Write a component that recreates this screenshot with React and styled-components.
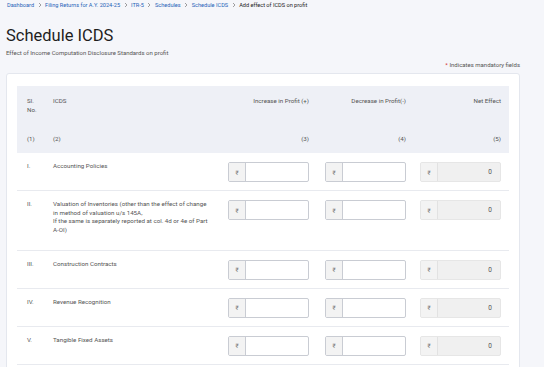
import styled, { createGlobalStyle } from 'styled-components';

const rows = [
  { no: 'I.', label: ['Accounting Policies'] },
  {
    no: 'II.',
    label: [
      'Valuation of Inventories (other than the effect of change',
      'in method of valuation u/s 145A,',
      'If the same is separately reported at col. 4d or 4e of Part',
      'A-OI)',
    ],
  },
  { no: 'III.', label: ['Construction Contracts'] },
  { no: 'IV.', label: ['Revenue Recognition'] },
  { no: 'V.', label: ['Tangible Fixed Assets'] },
];

const crumbs = [
  'Dashboard',
  'Filing Returns for A.Y. 2024-25',
  'ITR-5',
  'Schedules',
  'Schedule ICDS',
];

function Chevron() {
  return (
    <Sep viewBox="0 0 4 6" aria-hidden="true">
      <path d="M1 1l2 2-2 2" fill="none" stroke="#888" strokeWidth="0.8" />
    </Sep>
  );
}

function AmountInput({ disabled }) {
  return (
    <InputBox disabled={disabled}>
      <Prefix disabled={disabled}>₹</Prefix>
      <Field disabled={disabled}>{disabled ? '0' : ''}</Field>
    </InputBox>
  );
}

export default function App() {
  return (
    <Page>
      <GlobalStyle />
      <Breadcrumb>
        {crumbs.map((c) => (
          <Crumb key={c}>
            <CrumbLink>{c}</CrumbLink>
            <Chevron />
          </Crumb>
        ))}
        <Current>Add effect of ICDS on profit</Current>
      </Breadcrumb>

      <Title>Schedule ICDS</Title>
      <Subtitle>Effect of Income Computation Disclosure Standards on profit</Subtitle>
      <Mandatory>
        <Star>*</Star> Indicates mandatory fields
      </Mandatory>

      <Card>
        <HeadRow>
          <HeadCell>
            Sl.
            <br />
            No.
          </HeadCell>
          <HeadCell>ICDS</HeadCell>
          <HeadCell right>Increase in Profit (+)</HeadCell>
          <HeadCell right>Decrease in Profit(-)</HeadCell>
          <HeadCell right>Net Effect</HeadCell>
        </HeadRow>
        <NumRow>
          <HeadCell>(1)</HeadCell>
          <HeadCell>(2)</HeadCell>
          <HeadCell right>(3)</HeadCell>
          <HeadCell right>(4)</HeadCell>
          <HeadCell right>(5)</HeadCell>
        </NumRow>

        {rows.map((r) => (
          <Row key={r.no}>
            <Cell>{r.no}</Cell>
            <Label>
              {r.label.map((l) => (
                <div key={l}>{l}</div>
              ))}
            </Label>
            <InputCell>
              <AmountInput />
            </InputCell>
            <InputCell>
              <AmountInput />
            </InputCell>
            <InputCell>
              <AmountInput disabled />
            </InputCell>
          </Row>
        ))}
      </Card>
    </Page>
  );
}

const GlobalStyle = createGlobalStyle`
  body {
    margin: 0;
    background: #f5f6fa;
    font-family: Roboto, "Liberation Sans", sans-serif;
    color: #333;
  }
`;

const Page = styled.div`
  padding: 0 24px 0 6px;
  height: 367px;
  overflow: hidden;
`;

const Breadcrumb = styled.div`
  display: flex;
  align-items: center;
  height: 10px;
  font-size: 5.6px;
  padding-left: 1px;
`;

const Crumb = styled.span`
  display: flex;
  align-items: center;
`;

const CrumbLink = styled.span`
  color: #1f63b8;
`;

const Sep = styled.svg`
  width: 4px;
  height: 6px;
  margin: 0 3.5px;
`;

const Current = styled.span`
  color: #222;
`;

const Title = styled.h1`
  margin: 16px 0 0;
  font-size: 16.5px;
  font-weight: 400;
  color: #1e1e1e;
  line-height: 20px;
`;

const Subtitle = styled.p`
  margin: 3px 0 0;
  font-size: 6px;
  color: #555;
  line-height: 8px;
`;

const Mandatory = styled.div`
  text-align: right;
  font-size: 6px;
  color: #555;
  line-height: 8px;
  margin-top: 4px;
`;

const Star = styled.span`
  color: #d32f2f;
`;

const Card = styled.div`
  margin-top: 4px;
  background: #fff;
  border: 1px solid #e4e7ee;
  border-radius: 3px;
  padding: 12px 10px 40px 10px;
`;

const grid = `
  display: grid;
  grid-template-columns: 36px 1fr 97px 97px 95px;
`;

const HeadRow = styled.div`
  ${grid}
  background: #eef0f6;
  padding: 11px 0 10px;
`;

const NumRow = styled.div`
  ${grid}
  background: #eef0f6;
  padding: 10px 0 9px;
`;

const HeadCell = styled.div`
  font-size: 6.2px;
  line-height: 9px;
  color: #555;
  padding: 0 8px 0 10px;
  text-align: ${({ right }) => (right ? 'right' : 'left')};
  &:nth-child(2) {
    padding-left: 0;
  }
`;

const Row = styled.div`
  ${grid}
  padding: 9px 0 8px;
  border-bottom: 1px solid #e8eaef;
`;

const Cell = styled.div`
  font-size: 6.2px;
  line-height: 8.7px;
  color: #555;
  padding-left: 10px;
`;

const Label = styled.div`
  font-size: 6.2px;
  line-height: 8.7px;
  color: #555;
  padding-right: 10px;
  margin-bottom: 7px;
`;

const InputCell = styled.div`
  display: flex;
  justify-content: flex-end;
  padding-right: 8px;
`;

const InputBox = styled.div`
  display: flex;
  width: 81px;
  height: 20px;
  box-sizing: border-box;
  border: 1px solid ${({ disabled }) => (disabled ? '#e6e6e6' : '#c9ccd3')};
  border-radius: 2px;
  background: ${({ disabled }) => (disabled ? '#f0f0f0' : '#fff')};
  overflow: hidden;
`;

const Prefix = styled.span`
  width: 16px;
  flex: none;
  display: flex;
  align-items: center;
  justify-content: center;
  background: #f3f3f3;
  border-right: 1px solid ${({ disabled }) => (disabled ? '#e2e2e2' : '#c9ccd3')};
  font-size: 6px;
  color: #777;
`;

const Field = styled.span`
  flex: 1;
  display: flex;
  align-items: center;
  justify-content: flex-end;
  padding-right: 8px;
  font-size: 6.5px;
  color: #555;
`;
